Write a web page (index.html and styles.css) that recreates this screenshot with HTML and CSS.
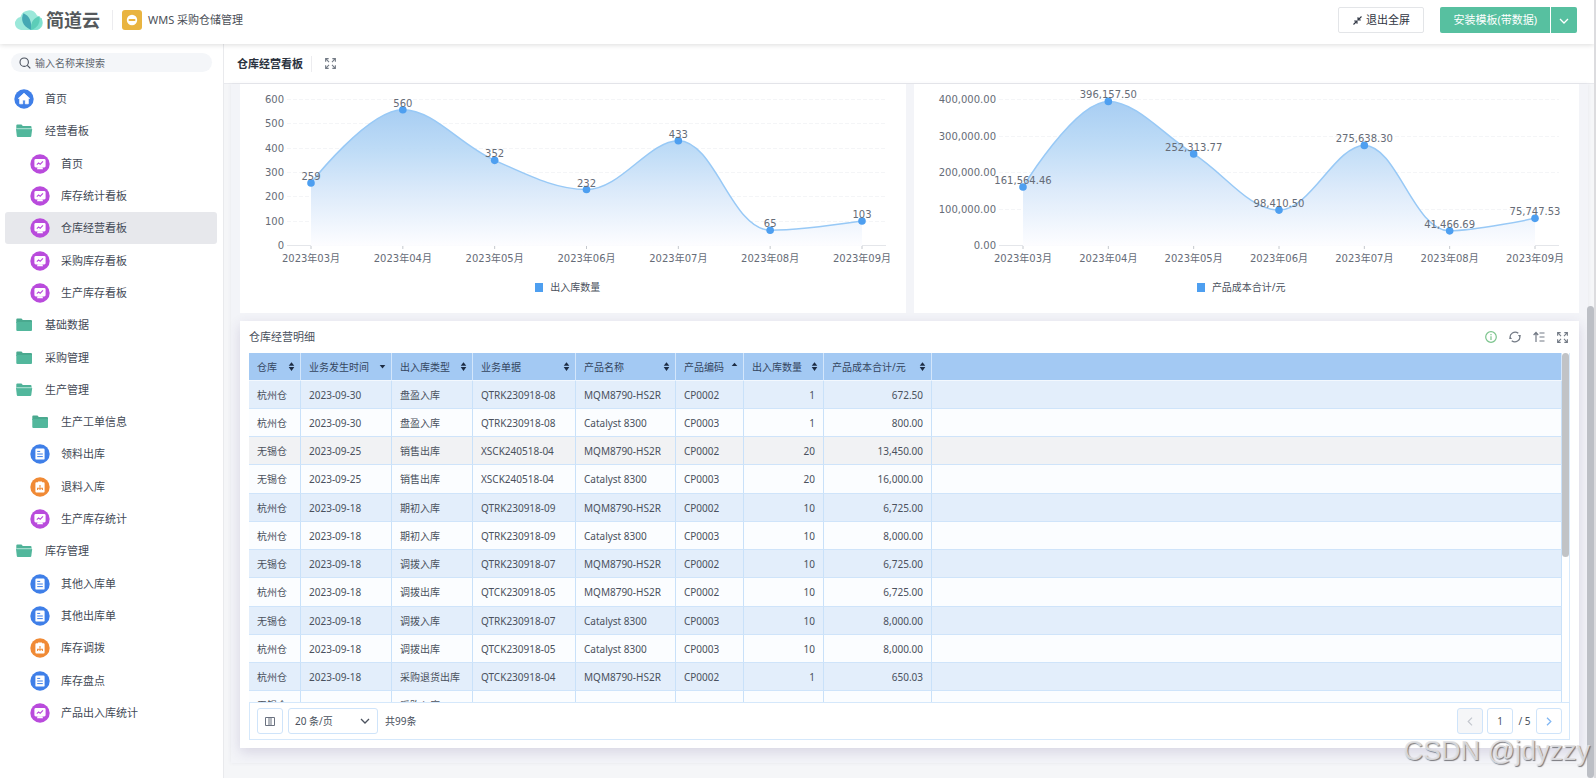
FILE: index.html
```html
<!DOCTYPE html>
<html lang="zh-CN">
<head>
<meta charset="utf-8">
<title>WMS 采购仓储管理</title>
<link rel="stylesheet" href="styles.css">
</head>
<body>
<svg class="sprite" aria-hidden="true">
  <symbol id="i-home" viewBox="0 0 20 20"><circle cx="10" cy="10" r="9.7" fill="#3f7fe8"/><path d="M10 4.2 4.4 9.4h1.3v5.4h3V11h2.6v3.8h3V9.4h1.3z" fill="#fff" stroke="#fff" stroke-width=".8" stroke-linejoin="round"/></symbol>
  <symbol id="i-board" viewBox="0 0 20 20"><circle cx="10" cy="10" r="9.7" fill="#b94bdc"/><rect x="4.4" y="5" width="11.2" height="8.4" rx="1.4" fill="#fff"/><path d="M7.6 13.2h4.8l.6 2H7z" fill="#fff"/><path d="M6.8 10.6 8.6 9l1.6 1.2L13 7.4" fill="none" stroke="#b94bdc" stroke-width="1.1"/></symbol>
  <symbol id="i-form" viewBox="0 0 20 20"><circle cx="10" cy="10" r="9.7" fill="#3f7fe8"/><rect x="5.4" y="4.6" width="9.2" height="11" rx="1.2" fill="#fff"/><path d="M7.2 7.4h3M7.2 10h5.6M7.2 12.6h5.6" stroke="#3f7fe8" stroke-width="1"/></symbol>
  <symbol id="i-flow" viewBox="0 0 20 20"><circle cx="10" cy="10" r="9.7" fill="#f08a35"/><path d="M6.4 5.2h7.2q1 0 1 1v8.2q0 1-1 1H6.4q-1 0-1-1V6.200q0-1 1-1zM8 4.400h4v1.600H8z" fill="#fff"/><path d="M10 8v2.400M7.600 13v-1.800h4.800V13M10 11v2" fill="none" stroke="#f08a35" stroke-width="1.100"/></symbol>
  <symbol id="i-folder" viewBox="0 0 20 20"><path d="M2.300 4.500q0-1 1-1h4.200l1.300 1.500h8.200q1 0 1 1V8H2.300z" fill="#4aa98f"/><path d="M2.300 7h15.700v8q0 1-1 1H3.300q-1 0-1-1z" fill="#52b79c"/></symbol>
  <symbol id="i-open" viewBox="0 0 20 20"><path d="M2.300 4.500q0-1 1-1h4.200l1.300 1.500h7.700q1 0 1 1V9H2.300z" fill="#4fb298"/><path d="M2 8.100h16.200l-.9 7q-.1 .9-1 .9H3.800q-.9 0-1-.9z" fill="#52b79c"/><path d="M2.300 7.700h15.400" stroke="#b6e4d8" stroke-width="1"/></symbol>
  <symbol id="i-expand" viewBox="0 0 12 12"><path d="M.7 4V.7H4M8 .7h3.300V4M11.300 8v3.300H8M4 11.300H.7V8M1 1l3.400 3.400M11 1 7.600 4.400M11 11 7.600 7.600M1 11l3.400-3.400" fill="none" stroke="currentColor" stroke-width="1.200"/></symbol>
  <symbol id="i-both" viewBox="0 0 8 10"><path d="M4 0 7.200 4.200H.8zM4 10 .8 5.600h6.400z" fill="#1d2c44"/></symbol>
  <symbol id="i-down" viewBox="0 0 8 10"><path d="M4 7.200.8 3.400h6.400z" fill="#1d2c44"/></symbol>
  <symbol id="i-up" viewBox="0 0 8 10"><path d="M4 .8 7.200 4.400H.8z" fill="#1d2c44"/></symbol>
</svg>

<div class="app">
  <header class="topbar">
    <div class="brand">
      <svg class="brand-mark" viewBox="0 0 30 22" aria-hidden="true">
        <path d="M7 21a6.500 6.500 0 0 1-.6-12.900A8.800 8.800 0 0 1 23 6.600 7.300 7.300 0 0 1 22.500 21z" fill="#9be8da"/>
        <path d="M17 21C17 13 21 9.500 27.500 9 29.500 15 27 21 21.500 21z" fill="#7fe0cf"/>
        <path d="M17 21C8 17 6.500 10 9.500 4.300 15.500 7 18 12.500 17 21z" fill="#45a8b4"/>
        <path d="M17 21C16.500 13 19.500 8.800 25.500 7.200 26.500 14 23.500 19 17 21z" fill="#5ccdb8"/>
      </svg>
      <span class="brand-name">简道云</span>
    </div>
    <span class="divider"></span>
    <svg class="app-mark" viewBox="0 0 20 20" aria-hidden="true"><rect width="20" height="20" rx="3" fill="#e9b440"/><circle cx="10" cy="10" r="5.200" fill="#fff"/><rect x="6.500" y="9" width="7" height="2" rx="1" fill="#e9b440"/></svg>
    <span class="app-name">WMS 采购仓储管理</span>
    <div class="topbar-actions">
      <button class="btn-plain" type="button">
        <svg width="9" height="9" viewBox="0 0 9 9" aria-hidden="true"><path d="M8.500.5 5.500 3.500M5 1.200V4h2.800M.5 8.500l3-3M4 7.800V5H1.200" fill="none" stroke="#2f3542" stroke-width="1.100"/></svg>
        退出全屏
      </button>
      <div class="btn-group">
        <button class="btn-green" type="button">安装模板(带数据)</button>
        <button class="btn-green btn-more" type="button" aria-label="更多"><svg width="10" height="6" viewBox="0 0 10 6"><path d="m1 1 4 4 4-4" fill="none" stroke="#fff" stroke-width="1.300"/></svg></button>
      </div>
    </div>
  </header>

  <div class="body">
    <nav class="sidebar">
      <label class="search">
        <svg width="12" height="12" viewBox="0 0 12 12" aria-hidden="true"><circle cx="5.200" cy="5.200" r="4.200" fill="none" stroke="#4b525e" stroke-width="1.100"/><path d="m8.300 8.300 3 3" stroke="#4b525e" stroke-width="1.200"/></svg>
        <input type="text" placeholder="输入名称来搜索" aria-label="输入名称来搜索">
      </label>
      <div class="menu">
        <a href="#"><svg><use href="#i-home"/></svg>首页</a>
        <a href="#"><svg><use href="#i-open"/></svg>经营看板</a>
        <a href="#" class="sub"><svg><use href="#i-board"/></svg>首页</a>
        <a href="#" class="sub"><svg><use href="#i-board"/></svg>库存统计看板</a>
        <a href="#" class="sub active"><svg><use href="#i-board"/></svg>仓库经营看板</a>
        <a href="#" class="sub"><svg><use href="#i-board"/></svg>采购库存看板</a>
        <a href="#" class="sub"><svg><use href="#i-board"/></svg>生产库存看板</a>
        <a href="#"><svg><use href="#i-folder"/></svg>基础数据</a>
        <a href="#"><svg><use href="#i-folder"/></svg>采购管理</a>
        <a href="#"><svg><use href="#i-open"/></svg>生产管理</a>
        <a href="#" class="sub"><svg><use href="#i-folder"/></svg>生产工单信息</a>
        <a href="#" class="sub"><svg><use href="#i-form"/></svg>领料出库</a>
        <a href="#" class="sub"><svg><use href="#i-flow"/></svg>退料入库</a>
        <a href="#" class="sub"><svg><use href="#i-board"/></svg>生产库存统计</a>
        <a href="#"><svg><use href="#i-open"/></svg>库存管理</a>
        <a href="#" class="sub"><svg><use href="#i-form"/></svg>其他入库单</a>
        <a href="#" class="sub"><svg><use href="#i-form"/></svg>其他出库单</a>
        <a href="#" class="sub"><svg><use href="#i-flow"/></svg>库存调拨</a>
        <a href="#" class="sub"><svg><use href="#i-form"/></svg>库存盘点</a>
        <a href="#" class="sub"><svg><use href="#i-board"/></svg>产品出入库统计</a>
      </div>
    </nav>

    <main class="main">
      <div class="page-head">
        <h1>仓库经营看板</h1>
        <span class="divider short"></span>
        <button class="icon-btn" type="button" aria-label="全屏"><svg width="11" height="11"><use href="#i-expand"/></svg></button>
      </div>

      <div class="viewport">
        <div class="dashboard">
          <div class="charts">
            <section class="card chart-card">
              <div class="plot" id="chart-count"></div>
              <div class="legend"><i></i>出入库数量</div>
            </section>
            <section class="card chart-card">
              <div class="plot" id="chart-cost"></div>
              <div class="legend"><i></i>产品成本合计/元</div>
            </section>
          </div>

          <section class="card table-card">
            <div class="card-head">
              <h2>仓库经营明细</h2>
              <div class="tools">
                <button class="icon-btn" type="button" aria-label="说明"><svg width="12" height="12" viewBox="0 0 12 12"><circle cx="6" cy="6" r="5.300" fill="none" stroke="#7cc48d" stroke-width="1.200"/><path d="M6 5.200V9M6 3v1.200" stroke="#7cc48d" stroke-width="1.200"/></svg></button>
                <button class="icon-btn" type="button" aria-label="刷新"><svg width="12" height="12" viewBox="0 0 12 12"><path d="M1.300 7.500A5 5 0 0 1 9.300 2.300M10.700 4.500A5 5 0 0 1 2.700 9.700" fill="none" stroke="currentColor" stroke-width="1.200"/><path d="M10.800 6.200 8.900 4h3zM1.200 5.800 3.100 8h-3z" fill="currentColor"/></svg></button>
                <button class="icon-btn" type="button" aria-label="排序"><svg width="12" height="12" viewBox="0 0 12 12"><path d="M3 11V1.800M.6 4 3 1.500 5.200 4M6.500 2h5M6.500 6h5M6.500 10h5" fill="none" stroke="currentColor" stroke-width="1.200"/></svg></button>
                <button class="icon-btn" type="button" aria-label="放大"><svg width="11" height="11"><use href="#i-expand"/></svg></button>
              </div>
            </div>
            <div class="table-wrap">
              <table>
                <colgroup><col class="c1"><col class="c2"><col class="c3"><col class="c4"><col class="c5"><col class="c6"><col class="c7"><col class="c8"><col></colgroup>
                <thead>
                  <tr>
                    <th><span>仓库<svg><use href="#i-both"/></svg></span></th>
                    <th><span>业务发生时间<svg><use href="#i-down"/></svg></span></th>
                    <th><span>出入库类型<svg><use href="#i-both"/></svg></span></th>
                    <th><span>业务单据<svg><use href="#i-both"/></svg></span></th>
                    <th><span>产品名称<svg><use href="#i-both"/></svg></span></th>
                    <th><span>产品编码<svg><use href="#i-up"/></svg></span></th>
                    <th><span>出入库数量<svg><use href="#i-both"/></svg></span></th>
                    <th><span>产品成本合计/元<svg><use href="#i-both"/></svg></span></th>
                    <th></th>
                  </tr>
                </thead>
                <tbody>
                  <tr><td>杭州仓</td><td>2023-09-30</td><td>盘盈入库</td><td>QTRK230918-08</td><td>MQM8790-HS2R</td><td>CP0002</td><td>1</td><td>672.50</td><td></td></tr>
                  <tr><td>杭州仓</td><td>2023-09-30</td><td>盘盈入库</td><td>QTRK230918-08</td><td>Catalyst 8300</td><td>CP0003</td><td>1</td><td>800.00</td><td></td></tr>
                  <tr class="hover"><td>无锡仓</td><td>2023-09-25</td><td>销售出库</td><td>XSCK240518-04</td><td>MQM8790-HS2R</td><td>CP0002</td><td>20</td><td>13,450.00</td><td></td></tr>
                  <tr><td>无锡仓</td><td>2023-09-25</td><td>销售出库</td><td>XSCK240518-04</td><td>Catalyst 8300</td><td>CP0003</td><td>20</td><td>16,000.00</td><td></td></tr>
                  <tr><td>杭州仓</td><td>2023-09-18</td><td>期初入库</td><td>QTRK230918-09</td><td>MQM8790-HS2R</td><td>CP0002</td><td>10</td><td>6,725.00</td><td></td></tr>
                  <tr><td>杭州仓</td><td>2023-09-18</td><td>期初入库</td><td>QTRK230918-09</td><td>Catalyst 8300</td><td>CP0003</td><td>10</td><td>8,000.00</td><td></td></tr>
                  <tr><td>无锡仓</td><td>2023-09-18</td><td>调拨入库</td><td>QTRK230918-07</td><td>MQM8790-HS2R</td><td>CP0002</td><td>10</td><td>6,725.00</td><td></td></tr>
                  <tr><td>杭州仓</td><td>2023-09-18</td><td>调拨出库</td><td>QTCK230918-05</td><td>MQM8790-HS2R</td><td>CP0002</td><td>10</td><td>6,725.00</td><td></td></tr>
                  <tr><td>无锡仓</td><td>2023-09-18</td><td>调拨入库</td><td>QTRK230918-07</td><td>Catalyst 8300</td><td>CP0003</td><td>10</td><td>8,000.00</td><td></td></tr>
                  <tr><td>杭州仓</td><td>2023-09-18</td><td>调拨出库</td><td>QTCK230918-05</td><td>Catalyst 8300</td><td>CP0003</td><td>10</td><td>8,000.00</td><td></td></tr>
                  <tr><td>杭州仓</td><td>2023-09-18</td><td>采购退货出库</td><td>QTCK230918-04</td><td>MQM8790-HS2R</td><td>CP0002</td><td>1</td><td>650.03</td><td></td></tr>
                  <tr><td>无锡仓</td><td></td><td>采购入库</td><td></td><td></td><td></td><td></td><td></td><td></td></tr>
                </tbody>
              </table>
              <div class="table-thumb"></div>
            </div>
            <div class="table-foot">
              <button class="box" type="button" aria-label="列设置"><svg width="10" height="9" viewBox="0 0 10 9"><path d="M.5.500h9v8h-9zM4 .5v8M6 .5v8" fill="none" stroke="#6b7280" stroke-width="1"/></svg></button>
              <div class="select-box">
                <select aria-label="每页条数"><option>20 条/页</option><option>50 条/页</option></select>
                <svg width="10" height="6" viewBox="0 0 10 6" aria-hidden="true"><path d="m1 1 4 4 4-4" fill="none" stroke="#4b525e" stroke-width="1.300"/></svg>
              </div>
              <span class="total">共99条</span>
              <div class="pager">
                <button class="box disabled" type="button" disabled aria-label="上一页"><svg width="6" height="9" viewBox="0 0 6 9"><path d="M5 .7 1.200 4.500 5 8.300" fill="none" stroke="#c3c7ce" stroke-width="1.200"/></svg></button>
                <input class="box" type="text" value="1" aria-label="页码">
                <span>/ 5</span>
                <button class="box" type="button" aria-label="下一页"><svg width="6" height="9" viewBox="0 0 6 9"><path d="M1 .7 4.800 4.500 1 8.300" fill="none" stroke="#82b7f3" stroke-width="1.300"/></svg></button>
              </div>
            </div>
          </section>
        </div>
        <div class="page-thumb"></div>
      </div>
    </main>
  </div>
  <div class="watermark">CSDN @jdyzzy</div>
</div>
<script src="chart.js"></script>
</body>
</html>
```
FILE: styles.css
```css
* { box-sizing: border-box; }

body {
  margin: 0;
  font-family: "Noto Sans", "Noto Sans CJK SC", sans-serif;
  font-size: 11px;
  line-height: 16px;
  color: #4a515d;
  background: #fff;
}

button, input, select { font: inherit; color: inherit; }
button { padding: 0; cursor: pointer; }
h1, h2 { margin: 0; font-size: 11px; }
.sprite { display: none; }

.app {
  position: relative;
  display: flex;
  flex-direction: column;
  height: 100vh;
  overflow: hidden;
  border-right: 2px solid #dcdcdf;
}

/* Top bar */
.topbar {
  position: relative;
  z-index: 2;
  display: flex;
  flex: none;
  align-items: center;
  height: 44px;
  padding: 0 17px 4px 14px;
  background: #fff;
  box-shadow: 0 1px 5px rgba(0, 0, 0, .14);
}
.brand { display: flex; align-items: center; gap: 2px; }
.brand-mark { width: 30px; height: 22px; }
.brand-name { font-size: 18px; line-height: 22px; font-weight: 700; color: #55595c; }
.divider { width: 1px; height: 20px; margin: 0 9px 0 12px; background: #ececef; }
.divider.short { height: 16px; margin: 0 13px 0 8px; }
.app-mark { width: 20px; height: 20px; }
.app-name { margin-left: 6px; color: #4b4f57; }
.topbar-actions { display: flex; gap: 16px; margin-left: auto; }
.btn-plain {
  display: flex;
  align-items: center;
  justify-content: center;
  gap: 4px;
  width: 86px;
  height: 26px;
  background: #fff;
  border: 1px solid #e3e5e8;
  border-radius: 2px;
  color: #2f3542;
}
.btn-group { display: flex; gap: 1px; }
.btn-green {
  height: 26px;
  padding: 0 13px;
  border: 0;
  border-radius: 2px 0 0 2px;
  background: #57c0a0;
  color: #fff;
}
.btn-more { width: 26px; padding: 0; border-radius: 0 2px 2px 0; }

.body { display: flex; flex: 1; min-height: 0; }

/* Sidebar */
.sidebar {
  display: flex;
  flex: none;
  flex-direction: column;
  width: 224px;
  padding: 9px 0 49px;
  border-right: 1px solid #e9eaed;
}
.search {
  display: flex;
  align-items: center;
  gap: 4px;
  height: 19px;
  margin: 0 11px 11px;
  padding: 0 8px;
  border-radius: 10px;
  background: #f4f6f9;
}
.search svg { flex: none; }
.search input {
  flex: 1;
  min-width: 0;
  height: 19px;
  padding: 0;
  border: 0;
  outline: 0;
  background: none;
  font-size: 10px;
}
.search input::placeholder { color: #5f6670; opacity: 1; }
.menu {
  display: grid;
  flex: 1;
  grid-auto-rows: 1fr;
  padding: 0 6px 0 5px;
}
.menu a {
  display: flex;
  align-items: center;
  gap: 11px;
  min-height: 24px;
  padding-left: 9px;
  border-radius: 3px;
  color: #434a56;
  text-decoration: none;
}
.menu a.sub { padding-left: 25px; }
.menu a.active { background: #e7e8ec; }
.menu svg { width: 20px; height: 20px; }

/* Page head */
.main { display: flex; flex: 1; flex-direction: column; min-width: 0; }
.page-head {
  display: flex;
  flex: none;
  align-items: center;
  height: 40px;
  padding-left: 13px;
  background: #fff;
  border-bottom: 1px solid #e9eaee;
}
.page-head h1 { font-weight: 700; color: #2b323e; }
.icon-btn { display: flex; border: 0; background: none; color: #737a85; }

.viewport {
  position: relative;
  display: flex;
  flex: 1;
  min-height: 0;
  padding: 0 6px 15px 7px;
  background: #f5f6f8;
}
.dashboard {
  display: flex;
  flex: 1;
  flex-direction: column;
  gap: 8px;
  min-width: 0;
  padding: 0 9px 15px;
  background: #f3f4f8;
  box-shadow: 0 0 4px rgba(60, 60, 110, .08);
}
.page-thumb {
  position: absolute;
  top: 222px;
  right: 0;
  bottom: 0;
  width: 7px;
  border-radius: 4px;
  background: #bcbfc5;
}
.card { background: #fff; }

/* Charts */
.charts { display: grid; flex: none; grid-template-columns: 1fr 1fr; gap: 8px; }
.chart-card { display: flex; flex-direction: column; height: 229px; }
.plot { height: 195px; }
.plot svg { display: block; width: 100%; height: 195px; }
.plot text { font-family: "DejaVu Sans", "Noto Sans CJK SC", sans-serif; font-size: 10px; fill: #666c77; }
.legend {
  display: flex;
  align-items: center;
  justify-content: center;
  gap: 7px;
  padding-right: 10px;
  font-size: 10px;
}
.legend i { width: 8px; height: 9px; background: #4e9ff0; }

/* Table */
.table-card {
  display: flex;
  flex: 1;
  flex-direction: column;
  min-height: 0;
  padding: 0 9px 8px;
  box-shadow: 0 4px 12px rgba(70, 50, 120, .16);
}
.card-head { display: flex; flex: none; align-items: center; height: 32px; padding-right: 2px; }
.card-head h2 { font-weight: 400; }
.tools { display: flex; align-items: center; gap: 12px; margin-left: auto; }
.table-wrap {
  position: relative;
  flex: 1;
  min-height: 0;
  padding-right: 7px;
  overflow: hidden;
  border-right: 1px solid #d9eafb;
}
.table-thumb {
  position: absolute;
  top: 0;
  right: 0;
  width: 7px;
  height: 204px;
  border-radius: 4px;
  background: #c1c3c6;
}
table { width: 100%; border-collapse: separate; border-spacing: 0; table-layout: fixed; font-size: 10px; }
.c1 { width: 52px; }
.c2 { width: 91px; }
.c3 { width: 81px; }
.c4 { width: 103px; }
.c5 { width: 100px; }
.c6 { width: 68px; }
.c7 { width: 80px; }
.c8 { width: 108px; }
th, td { padding: 0 8px; overflow: hidden; white-space: nowrap; text-align: left; font-weight: 400; }
th {
  height: 28px;
  background: #a3c9f3;
  border-right: 1px solid #d3e6fb;
  border-bottom: 1px solid #f3f8fe;
  color: #34455f;
}
th span { display: flex; align-items: center; justify-content: space-between; margin-right: -3px; }
th svg { width: 7px; height: 9px; }
td { height: 28px; border-right: 1px solid #c9e1f9; border-bottom: 1px solid #cfe4fa; background: #fbfdff; }
tbody tr:nth-child(odd) td { background: #e3eefb; }
tbody tr:nth-child(4n) td { height: 29px; }
tbody tr.hover td, tbody tr.hover:nth-child(odd) td { background: #f1f2f4; }
td:nth-child(7), td:nth-child(8) { text-align: right; }

.table-foot {
  display: flex;
  flex: none;
  align-items: center;
  gap: 5px;
  height: 38px;
  padding: 0 7px;
  border: 1px solid #d5e8fb;
  font-size: 10px;
}
.box {
  display: flex;
  align-items: center;
  justify-content: center;
  width: 26px;
  height: 26px;
  border: 1px solid #cfe4fa;
  border-radius: 3px;
  background: #fff;
  text-align: center;
}
input.box { padding: 0; }
.box.disabled { background: #f5f6f8; }
.select-box { position: relative; display: flex; width: 90px; }
.select-box select {
  width: 100%;
  height: 26px;
  padding: 0 6px;
  border: 1px solid #cfe4fa;
  border-radius: 3px;
  background: #fff;
  appearance: none;
}
.select-box svg { position: absolute; top: 10px; right: 8px; pointer-events: none; }
.total { margin-left: 2px; }
.pager { display: flex; align-items: center; gap: 4px; margin-left: auto; }
.pager span { width: 15px; text-align: center; }

.watermark {
  position: absolute;
  right: 4px;
  bottom: 10px;
  z-index: 3;
  font: 27px/34px "Liberation Sans", sans-serif;
  color: rgba(225, 225, 228, .9);
  text-shadow: 1px 1px 1px rgba(90, 90, 95, .8);
  pointer-events: none;
}
```
FILE: chart.js
```js
const MONTHS = ["03", "04", "05", "06", "07", "08", "09"].map(m => `2023年${m}月`);
const TOP = 16, BASE = 162, INSET = 24, SMOOTH = 0.36;

function clamp(v, a, b) {
  return Math.max(Math.min(v, Math.max(a, b)), Math.min(a, b));
}

// Smooth curve whose control points never pass their neighbouring points.
function curve(pts) {
  let d = `M${pts[0]}`;
  let cp0 = pts[0];
  for (let i = 1; i < pts.length; i++) {
    const [px, py] = pts[i - 1], [x, y] = pts[i];
    let cp1 = [x, y], next = [x, y];
    if (i < pts.length - 1) {
      const [nx, ny] = pts[i + 1];
      const a = Math.hypot(x - px, y - py), b = Math.hypot(nx - x, ny - y);
      const r = b / (a + b);
      const qx = clamp(x + (nx - px) * SMOOTH * r, x, nx);
      const qy = clamp(y + (ny - py) * SMOOTH * r, y, ny);
      cp1 = [clamp(x - (qx - x) * a / b, px, x), clamp(y - (qy - y) * a / b, py, y)];
      next = [x + (x - cp1[0]) * b / a, y + (y - cp1[1]) * b / a];
    }
    d += `C${cp0} ${cp1} ${x},${y}`;
    cp0 = next;
  }
  return d;
}

function draw(id, { values, max, step, left, right, format }) {
  const box = document.getElementById(id);
  const end = box.clientWidth - right;
  const x0 = left + INSET;
  const gap = (end - INSET - x0) / (values.length - 1);
  const toY = v => BASE - v / max * (BASE - TOP);
  const pts = values.map((v, i) => [x0 + gap * i, toY(v)]);
  const line = curve(pts);
  const peak = toY(Math.max(...values));
  let s = `<svg><defs><linearGradient id="${id}-g" gradientUnits="userSpaceOnUse" x1="0" x2="0" y1="${peak}" y2="${BASE}">
    <stop offset="0" stop-color="#a3cbf2"/><stop offset=".3" stop-color="#bbdaf6"/><stop offset=".6" stop-color="#dae9fa"/><stop offset="1" stop-color="#fdfdff"/></linearGradient></defs>`;
  for (let v = 0; v <= max; v += step) {
    const y = Math.round(toY(v)) - 0.5;
    s += `<path d="M${left} ${y}H${end}" stroke="${v ? "#f4f5f7" : "#e4e6ea"}" ${v ? 'stroke-dasharray="4 2"' : ""}/>`;
    s += `<text x="${left - 3}" y="${y + 3}" text-anchor="end">${format(v)}</text>`;
  }
  s += `<path d="${line}V${BASE}H${x0}Z" fill="url(#${id}-g)" opacity=".95"/>`;
  s += `<path d="${line}" fill="none" stroke="#98c9f6" stroke-width="1.5"/>`;
  pts.forEach(([x, y], i) => {
    s += `<path d="M${x} ${BASE}v3" stroke="#c4c8ce"/>`;
    s += `<circle cx="${x}" cy="${y}" r="3.8" fill="#4e9ff0"/>`;
    s += `<text x="${x}" y="${y - 3}" text-anchor="middle">${format(values[i])}</text>`;
    s += `<text x="${x}" y="178" text-anchor="middle">${MONTHS[i]}</text>`;
  });
  box.innerHTML = s + "</svg>";
}

const money = v => v.toLocaleString("en-US", { minimumFractionDigits: 2, maximumFractionDigits: 2 });

function render() {
  draw("chart-count", { values: [259, 560, 352, 232, 433, 65, 103], max: 600, step: 100, left: 47, right: 20, format: String });
  draw("chart-cost", { values: [161564.46, 396157.5, 252313.77, 98410.5, 275638.3, 41466.69, 75747.53], max: 400000, step: 100000, left: 85, right: 21, format: money });
}

render();
window.addEventListener("resize", render);
```
